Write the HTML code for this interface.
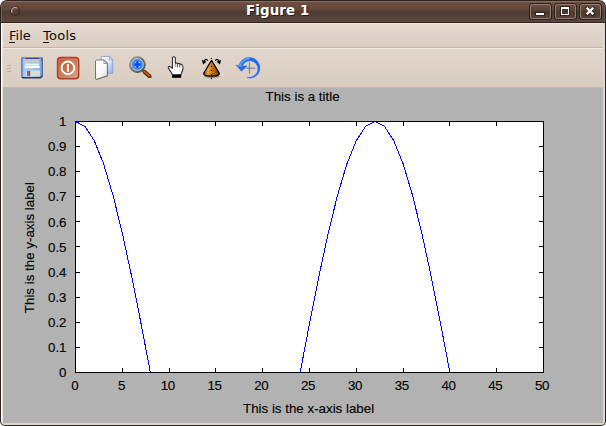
<!DOCTYPE html>
<html><head><meta charset="utf-8"><title>Figure 1</title>
<style>
html,body{margin:0;padding:0;background:#fff;}
body{width:606px;height:426px;overflow:hidden;position:relative;font-family:"DejaVu Sans","Liberation Sans",sans-serif;font-size:13.33px;}
.win{position:absolute;left:0;top:0;width:606px;height:426px;box-sizing:border-box;border-radius:7px 7px 5px 5px;background:#2b2420;overflow:hidden;}
.titlebar{position:absolute;left:1px;top:1px;width:604px;height:21px;border-radius:6px 6px 0 0;box-shadow:inset 1px 0 0 rgba(255,235,220,.16),inset -1px 0 0 rgba(255,235,220,.10);
 background:linear-gradient(to bottom,#8a6d5f 0px,#8a6d5f 1px,#6f4f40 1px,#6a4d3f 4px,#5d463a 9px,#4f3d34 10px,#4f3d34 13px,#57423a 17px,#5e4639 21px);}
.title{position:absolute;left:246px;top:0;height:22px;line-height:21px;white-space:nowrap;color:#fff;font-weight:bold;font-size:13.33px;letter-spacing:0.14px;text-shadow:1px 1px 0 #2a1d17;}
.btn{position:absolute;top:4px;width:21px;height:15px;box-sizing:border-box;border:1px solid #907f77;border-radius:2.5px;background:linear-gradient(to bottom,#6c4e40 0,#5a4338 40%,#4c392f 55%,#5a4237 100%);box-shadow:0 0 0 1px rgba(38,26,20,.8);}
.body{position:absolute;left:1px;top:23px;width:604px;height:402px;background:#e0d6cc;border-radius:0 0 4px 4px;}
.menubar{position:absolute;left:3px;top:23px;width:600px;height:25px;background:linear-gradient(to bottom,#efe7df 0,#efe7df 1px,#e4d9d0 1px,#dbcec3 24px,#c9b5a6 24px,#c9b5a6 25px);}
.menu{position:absolute;top:27px;height:17px;line-height:17px;color:#0a0a0a;font-size:13px;}
.menu u{text-decoration:none;}
.ul{position:absolute;top:42px;width:6px;height:1px;background:#1a1a1a;}
.toolbar{position:absolute;left:3px;top:48px;width:600px;height:40px;background:linear-gradient(to bottom,#f2ebe5 0,#f2ebe5 1px,#e2d7cd 1px,#d9ccc0 39px,#cdb8a8 39px,#cdb8a8 40px);}
.fig{position:absolute;left:3px;top:88px;width:600px;height:335px;background:#b2b2b2;}
.whitel{position:absolute;left:1px;top:23px;width:1px;height:398px;background:#fff;}
.lightl{position:absolute;left:2px;top:23px;width:1px;height:400px;background:#eee7e0;}
.glyph{position:absolute;left:0;top:0;}
.grip i{position:absolute;left:7px;width:4px;height:1px;background:#bfab9b;}
svg.plot{position:absolute;left:0;top:0;}
svg.ico{position:absolute;left:0;top:0;}
</style></head>
<body>
<div class="win">
 <div class="titlebar"></div>

 <div class="title"><span>Figure 1</span></div>
 <div class="btn" style="left:530px"></div>
 <div class="btn" style="left:555px"></div>
 <div class="btn" style="left:580px"></div>
 <svg class="glyph" width="606" height="24" viewBox="0 0 606 24">
  <circle cx="15.1" cy="11" r="4.4" fill="#5a4136" fill-opacity="0.5" stroke="#37271f" stroke-width="1"/>
  <path d="M11.93 12.48 A3.5 3.5 0 0 1 17.11 8.13" fill="none" stroke="#b9aaa1" stroke-width="1.1" stroke-linecap="round"/>
  <g shape-rendering="crispEdges"><rect x="535" y="12" width="10" height="4" fill="#2c1f19" opacity=".8"/><rect x="536" y="13" width="8" height="2" fill="#fff"/>
  <rect x="560" y="6" width="10" height="10" fill="#2c1f19" opacity=".8"/><rect x="561" y="7" width="8" height="8" fill="#fff"/><rect x="562" y="9" width="6" height="5" fill="#4a362c"/></g>
  <path d="M586.7 7.7 L593.3 14.3 M593.3 7.7 L586.7 14.3" stroke="#2c1f19" stroke-width="3.8" stroke-linecap="round" opacity=".7" transform="translate(0.2 0.3)"/>
  <path d="M586.7 7.7 L593.3 14.3 M593.3 7.7 L586.7 14.3" stroke="#fff" stroke-width="2.3" stroke-linecap="butt"/>
 </svg>
 <div class="body"></div>
 <div class="whitel"></div><div class="lightl"></div>
 <div class="menubar"></div>
 <div class="menu" style="left:9px"><u>F</u>ile</div>
 <div class="menu" style="left:43px;letter-spacing:0.25px"><u>T</u>ools</div>
 <div class="ul" style="left:9px"></div><div class="ul" style="left:43px"></div>
 <div class="toolbar"></div>
 <div class="grip"><i style="top:65px"></i><i style="top:68px"></i><i style="top:71px"></i></div>
 <div class="fig"></div>
 <svg class="plot" width="606" height="426" viewBox="0 0 606 426">
<rect x="75" y="121" width="469" height="252" fill="#fff"/>
<clipPath id="ax"><rect x="76" y="121" width="467" height="251"/></clipPath>
<path d="M75.50 121.50 L84.86 126.32 L94.22 140.61 L103.58 163.80 L112.94 195.02 L122.30 233.05 L131.66 276.45 L141.02 323.53 L150.38 372.50 L159.74 421.47 L169.10 468.55 L178.46 511.95 L187.82 549.98 L197.18 581.20 L206.54 604.39 L215.90 618.68 L225.26 623.50 L234.62 618.68 L243.98 604.39 L253.34 581.20 L262.70 549.98 L272.06 511.95 L281.42 468.55 L290.78 421.47 L300.14 372.50 L309.50 323.53 L318.86 276.45 L328.22 233.05 L337.58 195.02 L346.94 163.80 L356.30 140.61 L365.66 126.32 L375.02 121.50 L384.38 126.32 L393.74 140.61 L403.10 163.80 L412.46 195.02 L421.82 233.05 L431.18 276.45 L440.54 323.53 L449.90 372.50 L459.26 421.47 L468.62 468.55 L477.98 511.95 L487.34 549.98 L496.70 581.20 L506.06 604.39 L515.42 618.68 L524.78 623.50 L534.14 618.68 L543.50 604.39" fill="none" stroke="#0000ff" stroke-width="1" shape-rendering="crispEdges" clip-path="url(#ax)"/>
<g fill="#000" shape-rendering="crispEdges">
<rect x="75" y="121" width="469" height="1"/>
<rect x="75" y="372" width="469" height="1"/>
<rect x="75" y="121" width="1" height="252"/>
<rect x="543" y="121" width="1" height="252"/>
<rect x="75" y="368" width="1" height="4"/><rect x="75" y="122" width="1" height="4"/><rect x="122" y="368" width="1" height="4"/><rect x="122" y="122" width="1" height="4"/><rect x="169" y="368" width="1" height="4"/><rect x="169" y="122" width="1" height="4"/><rect x="215" y="368" width="1" height="4"/><rect x="215" y="122" width="1" height="4"/><rect x="262" y="368" width="1" height="4"/><rect x="262" y="122" width="1" height="4"/><rect x="309" y="368" width="1" height="4"/><rect x="309" y="122" width="1" height="4"/><rect x="356" y="368" width="1" height="4"/><rect x="356" y="122" width="1" height="4"/><rect x="403" y="368" width="1" height="4"/><rect x="403" y="122" width="1" height="4"/><rect x="449" y="368" width="1" height="4"/><rect x="449" y="122" width="1" height="4"/><rect x="496" y="368" width="1" height="4"/><rect x="496" y="122" width="1" height="4"/><rect x="543" y="368" width="1" height="4"/><rect x="543" y="122" width="1" height="4"/><rect x="76" y="372" width="4" height="1"/><rect x="539" y="372" width="4" height="1"/><rect x="76" y="347" width="4" height="1"/><rect x="539" y="347" width="4" height="1"/><rect x="76" y="322" width="4" height="1"/><rect x="539" y="322" width="4" height="1"/><rect x="76" y="297" width="4" height="1"/><rect x="539" y="297" width="4" height="1"/><rect x="76" y="272" width="4" height="1"/><rect x="539" y="272" width="4" height="1"/><rect x="76" y="246" width="4" height="1"/><rect x="539" y="246" width="4" height="1"/><rect x="76" y="221" width="4" height="1"/><rect x="539" y="221" width="4" height="1"/><rect x="76" y="196" width="4" height="1"/><rect x="539" y="196" width="4" height="1"/><rect x="76" y="171" width="4" height="1"/><rect x="539" y="171" width="4" height="1"/><rect x="76" y="146" width="4" height="1"/><rect x="539" y="146" width="4" height="1"/><rect x="76" y="121" width="4" height="1"/><rect x="539" y="121" width="4" height="1"/>
</g>
<g font-family="'Liberation Sans', Arial, Helvetica, sans-serif" font-size="13.33px" fill="#000" stroke="#000" stroke-width="0.12">
<text x="74.9" y="390.3" text-anchor="middle">0</text><text x="121.7" y="390.3" text-anchor="middle">5</text><text x="167.7" y="390.3" text-anchor="middle" letter-spacing="-0.4">10</text><text x="214.5" y="390.3" text-anchor="middle" letter-spacing="-0.4">15</text><text x="261.3" y="390.3" text-anchor="middle" letter-spacing="-0.4">20</text><text x="308.1" y="390.3" text-anchor="middle" letter-spacing="-0.4">25</text><text x="354.9" y="390.3" text-anchor="middle" letter-spacing="-0.4">30</text><text x="401.7" y="390.3" text-anchor="middle" letter-spacing="-0.4">35</text><text x="448.5" y="390.3" text-anchor="middle" letter-spacing="-0.4">40</text><text x="495.3" y="390.3" text-anchor="middle" letter-spacing="-0.4">45</text><text x="542.1" y="390.3" text-anchor="middle" letter-spacing="-0.4">50</text>
<text x="66.5" y="377.1" text-anchor="end">0</text><text x="66.5" y="352.0" text-anchor="end">0.1</text><text x="66.5" y="326.9" text-anchor="end">0.2</text><text x="66.5" y="301.8" text-anchor="end">0.3</text><text x="66.5" y="276.7" text-anchor="end">0.4</text><text x="66.5" y="251.6" text-anchor="end">0.5</text><text x="66.5" y="226.5" text-anchor="end">0.6</text><text x="66.5" y="201.4" text-anchor="end">0.7</text><text x="66.5" y="176.3" text-anchor="end">0.8</text><text x="66.5" y="151.2" text-anchor="end">0.9</text><text x="66.5" y="126.1" text-anchor="end">1</text>
<text x="302.6" y="101" text-anchor="middle">This is a title</text>
<text x="308.6" y="413.3" text-anchor="middle">This is the x-axis label</text>
<text transform="translate(33.6 247.6) rotate(-90)" text-anchor="middle">This is the y-axis label</text>
</g>
</svg>
 <svg class="ico" width="606" height="426" viewBox="0 0 606 426">
<defs>
<linearGradient id="flB" x1="0" y1="0" x2="1" y2="0"><stop offset="0" stop-color="#6a9ae2"/><stop offset="0.1" stop-color="#a6c8f6"/><stop offset="0.5" stop-color="#a4c9f5"/><stop offset="0.9" stop-color="#7fb0ee"/><stop offset="1" stop-color="#5a8cd8"/></linearGradient>
<linearGradient id="flL" x1="0" y1="0" x2="0" y2="1"><stop offset="0" stop-color="#cfd6d6"/><stop offset="0.2" stop-color="#b7c2c2"/><stop offset="0.3" stop-color="#ccd4d4"/><stop offset="0.42" stop-color="#b4c0c0"/><stop offset="0.52" stop-color="#c8d2d2"/><stop offset="0.62" stop-color="#f4fbfc"/><stop offset="0.72" stop-color="#a6e2ec"/><stop offset="0.82" stop-color="#ffffff"/><stop offset="1" stop-color="#ffffff"/></linearGradient>
<linearGradient id="pw" x1="0" y1="0" x2="1" y2="1"><stop offset="0" stop-color="#bd5934"/><stop offset="0.5" stop-color="#cb7b58"/><stop offset="1" stop-color="#dba990"/></linearGradient>
<linearGradient id="pgF" x1="0" y1="0" x2="1" y2="1"><stop offset="0" stop-color="#ffffff"/><stop offset="0.6" stop-color="#f8f8f8"/><stop offset="1" stop-color="#d0d0d0"/></linearGradient>
<linearGradient id="pgB" x1="0" y1="0" x2="0.7" y2="1"><stop offset="0" stop-color="#f8fafe"/><stop offset="0.5" stop-color="#e2eafc"/><stop offset="1" stop-color="#9ab8f0"/></linearGradient>
<radialGradient id="lens" cx="0.5" cy="0.5" r="0.5"><stop offset="0" stop-color="#1c60f6"/><stop offset="0.45" stop-color="#3a84e0"/><stop offset="0.75" stop-color="#4a94da"/><stop offset="1" stop-color="#7ab2e2"/></radialGradient>
<linearGradient id="cone" x1="0" y1="0" x2="1" y2="0"><stop offset="0" stop-color="#b55f0e"/><stop offset="0.3" stop-color="#eaa040"/><stop offset="0.55" stop-color="#c97418"/><stop offset="1" stop-color="#6e3600"/></linearGradient>
<linearGradient id="arr" x1="0" y1="0" x2="1" y2="1"><stop offset="0" stop-color="#3a84f8"/><stop offset="0.5" stop-color="#1766f0"/><stop offset="1" stop-color="#2a78f6"/></linearGradient>
<linearGradient id="ring" x1="0" y1="0" x2="1" y2="1"><stop offset="0" stop-color="#a8a8a8"/><stop offset="0.5" stop-color="#6e6e6e"/><stop offset="1" stop-color="#505050"/></linearGradient>
<filter id="b3" x="-20%" y="-20%" width="140%" height="140%"><feGaussianBlur stdDeviation="0.35"/></filter>
<filter id="b6" x="-20%" y="-20%" width="140%" height="140%"><feGaussianBlur stdDeviation="0.6"/></filter>
</defs>

<!-- save / floppy -->
<g>
<path d="M22 58 H42.4 V76.4 L40.8 78.2 H22 Z" fill="#3c4454" opacity="0.6" filter="url(#b6)" transform="translate(0.4 0.5)"/>
<path d="M21.8 57.8 H42.4 V75.8 L40.4 77.8 H21.8 Z" fill="url(#flB)" stroke="#52617e" stroke-width="0.9"/>
<path d="M22 77.5 H40.4 L42.2 75.7" fill="none" stroke="#353d4c" stroke-width="1.1"/>
<rect x="25.2" y="58.4" width="14" height="9.6" fill="url(#flL)"/>
<rect x="25.2" y="58" width="14" height="1" fill="#3d3fb6"/>
<rect x="24.8" y="66.3" width="14.8" height="1.6" fill="#ffffff"/>
<rect x="26" y="69.9" width="14" height="6.3" fill="#dadbdd"/>
<rect x="26" y="69.7" width="14" height="0.9" fill="#aab6c8"/>
<rect x="27.2" y="71" width="3" height="4.9" fill="#58585a"/>
<rect x="28.1" y="71.4" width="1.2" height="4.3" fill="#7a7a7c"/>
<rect x="41" y="59" width="1" height="1" fill="#2c4f9e"/>
</g>

<!-- power -->
<g>
<rect x="57.6" y="57.6" width="21" height="21" rx="3.2" fill="url(#pw)" stroke="#b43d27" stroke-width="1.6"/>
<rect x="58.9" y="58.9" width="18.400" height="18.400" rx="2.2" fill="none" stroke="#e0a488" stroke-width="0.7" opacity="0.6"/>
<circle cx="67.9" cy="67.8" r="6.300" fill="#c4663c" fill-opacity="0.5" stroke="#ffffff" stroke-width="1.9"/>
<rect x="66.950" y="63.9" width="1.9" height="7.9" rx="0.5" fill="#ffffff"/>
</g>

<!-- copy pages -->
<g>
<path d="M101.300 56.400 H109.600 L112.700 59.400 V73.200 L101.300 73.600 Z" fill="url(#pgB)" stroke="#7d98d2" stroke-width="0.8"/>
<path d="M109.400 56.600 V59.800 H112.500 Z" fill="#e8eefb" stroke="#7f96c8" stroke-width="0.7"/>
<path d="M95.400 61.200 L96.400 59.900 L104.300 59.600 L107.700 63.200 L107.700 76 L96.800 79.500 L95.300 79 Z" fill="#3a3a3a" opacity="0.65" filter="url(#b3)" transform="translate(0.1 0.3)"/>
<path d="M95.500 61.100 L96.300 60.100 L104.100 59.800 L107.400 63.200 L107.400 75.800 L96.800 79.200 L95.500 78.800 Z" fill="url(#pgF)" stroke="#5c5c5c" stroke-width="0.8"/>
<path d="M103.900 60 V63.500 H107.200 Z" fill="#e0e0e0" stroke="#7a7a7a" stroke-width="0.7"/>
</g>

<!-- magnifier -->
<g>
<path d="M143.800 71.300 L149.700 76.300" stroke="#3a2a1a" stroke-width="4" stroke-linecap="round" opacity="0.5" filter="url(#b3)" transform="translate(0.4 0.5)"/>
<path d="M142 70 L144.600 72.200" stroke="#606060" stroke-width="2.2" stroke-linecap="butt"/>
<path d="M144.300 71.700 L149.400 76" stroke="#54280a" stroke-width="3.700" stroke-linecap="round"/>
<path d="M144.300 71.500 L149.300 75.700" stroke="#b8590e" stroke-width="2.1" stroke-linecap="round"/>
<circle cx="137.3" cy="64.6" r="8.1" fill="#4a4a4a" opacity="0.6" filter="url(#b3)" transform="translate(0.3 0.5)"/>
<circle cx="137.3" cy="64.5" r="7.3" fill="url(#lens)" stroke="url(#ring)" stroke-width="1.9"/>
<circle cx="137.3" cy="64.5" r="6" fill="none" stroke="#c4d2e0" stroke-width="0.8"/>
<path d="M136.200 61.400 H138.400 V63.400 H140.400 V65.600 H138.400 V67.600 H136.200 V65.600 H134.200 V63.400 H136.200 Z" fill="#0c48ff"/>
<g fill="#d6e8fb" opacity="0.85"><circle cx="135.200" cy="62.400" r="0.7"/><circle cx="139.400" cy="62.400" r="0.7"/><circle cx="135.200" cy="66.600" r="0.6"/><circle cx="139.400" cy="66.600" r="0.6"/></g>
</g>

<!-- hand -->
<g>
<path d="M172.400 58 Q172.400 56.800 173.850 56.800 Q175.300 56.800 175.300 58 V63.200 Q176.400 62.600 177.500 63.600 Q178.800 63 179.900 64.200 Q181.200 63.800 182.200 65 Q183 65.800 183 67.400 Q183 70.400 181.400 73 L181 74.800 H172.400 L171.600 73 Q170 70.600 168.600 68.400 Q167.800 67.200 168.600 66.600 Q169.600 66 170.600 67 L172.400 68.400 Z" fill="#ffffff" stroke="#222" stroke-width="1.05" stroke-linejoin="round"/>
<path d="M177.400 64 V67.200 M179.800 64.600 V67.400" stroke="#333" stroke-width="0.9" fill="none"/>
<path d="M175.200 63.400 V66.800" stroke="#555" stroke-width="0.7" fill="none"/>
<rect x="172" y="74.800" width="9.200" height="3" fill="#000"/>
</g>

<!-- rotate cone -->
<g>
<ellipse cx="212" cy="76.300" rx="7.800" ry="1.600" fill="#4a4038" opacity="0.55" filter="url(#b6)"/>
<path d="M211.500 60.300 L219.300 73.400 Q219.500 75 216.600 75.600 Q211.500 76.500 206.400 75.600 Q203.500 75 203.700 73.400 Z" fill="url(#cone)" stroke="#000" stroke-width="1.250" stroke-linejoin="round"/>
<g fill="#000"><circle cx="211.500" cy="58.400" r="0.7"/><circle cx="211.500" cy="66.400" r="0.7"/><circle cx="211.500" cy="70.400" r="0.7"/><circle cx="211.500" cy="74.500" r="0.7"/><circle cx="211.500" cy="78.500" r="0.7"/></g>
<path d="M207.800 60.700 Q205.700 57.800 203.900 61.500" fill="none" stroke="#000" stroke-width="1.3"/>
<path d="M202.100 60.300 L206.100 61.700 L203.300 64.200 Z" fill="#000" stroke="#000" stroke-width="0.4" stroke-linejoin="round"/>
<path d="M215.200 60.700 Q217.300 57.800 219.100 61.500" fill="none" stroke="#000" stroke-width="1.3"/>
<path d="M220.900 60.300 L216.900 61.700 L219.700 64.200 Z" fill="#000" stroke="#000" stroke-width="0.4" stroke-linejoin="round"/>
</g>

<!-- reset / undo -->
<g>
<path d="M249.400 62.500 V73.800 M246.300 68.200 H255.200" stroke="#4f6f9e" stroke-width="0.9" fill="none"/>
<path d="M247.20 77.88 L248.35 78.10 L249.51 78.18 L250.69 78.13 L251.85 77.94 L252.99 77.62 L254.10 77.17 L255.14 76.59 L256.12 75.90 L257.01 75.09 L257.81 74.18 L258.50 73.18 L259.07 72.11 L259.48 70.96 L259.75 69.77 L259.89 68.55 L259.88 67.33 L259.73 66.12 L259.45 64.94 L259.03 63.79 L258.48 62.70 L257.81 61.68 L257.03 60.74 L256.14 59.90 L255.17 59.17 L254.11 58.56 L252.99 58.06 L251.83 57.71 L250.63 57.48 L249.41 57.40 L248.19 57.46 L246.99 57.66 L245.81 57.99 L244.69 58.46 L243.62 59.05 L242.63 59.76 L241.73 60.58 L240.92 61.50 L240.23 62.51 L239.66 63.59 L239.22 64.72 L242.74 65.87 L243.03 65.13 L243.40 64.43 L243.85 63.77 L244.37 63.17 L244.96 62.64 L245.60 62.17 L246.30 61.79 L247.03 61.48 L247.79 61.27 L248.58 61.14 L249.37 61.00 L250.19 60.95 L251.02 61.00 L251.85 61.15 L252.67 61.39 L253.46 61.74 L254.22 62.18 L254.93 62.71 L255.59 63.33 L256.17 64.03 L256.68 64.81 L257.09 65.65 L257.41 66.54 L257.63 67.48 L257.74 68.44 L257.73 69.43 L257.61 70.42 L257.38 71.39 L256.99 72.33 L256.49 73.22 L255.88 74.05 L255.19 74.82 L254.40 75.50 L253.53 76.09 L252.59 76.58 L251.60 76.96 L250.56 77.23 L249.50 77.37 L248.41 77.40 L247.32 77.29 Z" fill="url(#arr)" stroke="#1a62e6" stroke-width="0.3"/>
<path d="M248.49 58.74 L247.69 58.84 L246.89 59.02 L246.12 59.26 L245.37 59.57 L244.65 59.95 L243.97 60.38 L243.32 60.88 L242.72 61.42 L242.18 62.02 L241.68 62.67 L241.25 63.35 L240.87 64.07 L240.56 64.82" fill="none" stroke="#9cc6ff" stroke-width="1" stroke-linecap="round" opacity="0.9"/>
<path d="M236.100 65.200 Q241.800 66.400 247.100 66 L241.500 71.200 Z" fill="#1f6ef2" stroke="#1a60dc" stroke-width="0.5" stroke-linejoin="round"/>
<path d="M238 66 L242.500 66.600" stroke="#6aa4ff" stroke-width="0.7" fill="none"/>
</g>
</svg>
</div>
</body></html>
